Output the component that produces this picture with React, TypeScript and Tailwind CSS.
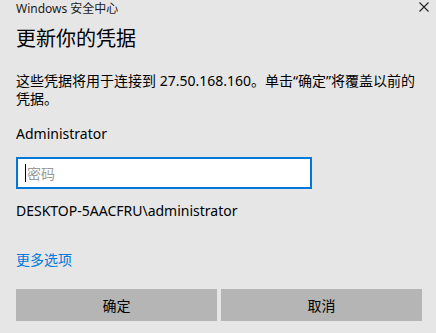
const FONT = "font-['Noto_Sans','Noto_Sans_CJK_SC',sans-serif]"

export default function App() {
  return (
    <div className={`w-[436px] h-[333px] bg-[#e6e6e6] text-black ${FONT} overflow-hidden`}>
      <div className="h-[20px] flex items-start justify-between pl-4 pr-[7px] pt-[1px]">
        <span className="text-[12px] leading-[16px] text-[#1a1a1a]">Windows 安全中心</span>
        <button className="mt-[1px] text-[#222]">
          <svg width="10" height="10" viewBox="0 0 10 10" fill="none" stroke="currentColor" strokeWidth="1.1">
            <path d="M0.5 0.5L9.5 9.5M9.5 0.5L0.5 9.5" />
          </svg>
        </button>
      </div>

      <div className="px-4">
        <h1 className="mt-[7px] text-[20px] leading-[24px]">更新你的凭据</h1>

        <p className="mt-[21px] text-[14px] leading-[18px]">
          这些凭据将用于连接到 27.50.168.160。单击“确定”将覆盖以前的凭据。
        </p>

        <p className="mt-[17px] text-[14px] leading-[18px]">Administrator</p>

        <div className="mt-[14px] w-[296px] h-[32px] bg-white border-2 border-[#0078d7] flex items-center pl-[7px]">
          <span className="w-px h-[18px] bg-black" />
          <input
            className="flex-1 min-w-0 bg-transparent outline-none text-[14px] pl-[1px] placeholder:text-[#9a9a9a]"
            placeholder="密码"
          />
        </div>

        <p className="mt-[13px] text-[14px] leading-[18px]">DESKTOP-5AACFRU\administrator</p>

        <a className="block mt-[31px] text-[14px] leading-[18px] text-[#0078d7]">更多选项</a>

        <div className="mt-[20px] grid grid-cols-2 gap-1 w-[406px]">
          <button className="h-[32px] bg-[#b5b5b5] text-[14px]">确定</button>
          <button className="h-[32px] bg-[#b5b5b5] text-[14px]">取消</button>
        </div>
      </div>
    </div>
  )
}
